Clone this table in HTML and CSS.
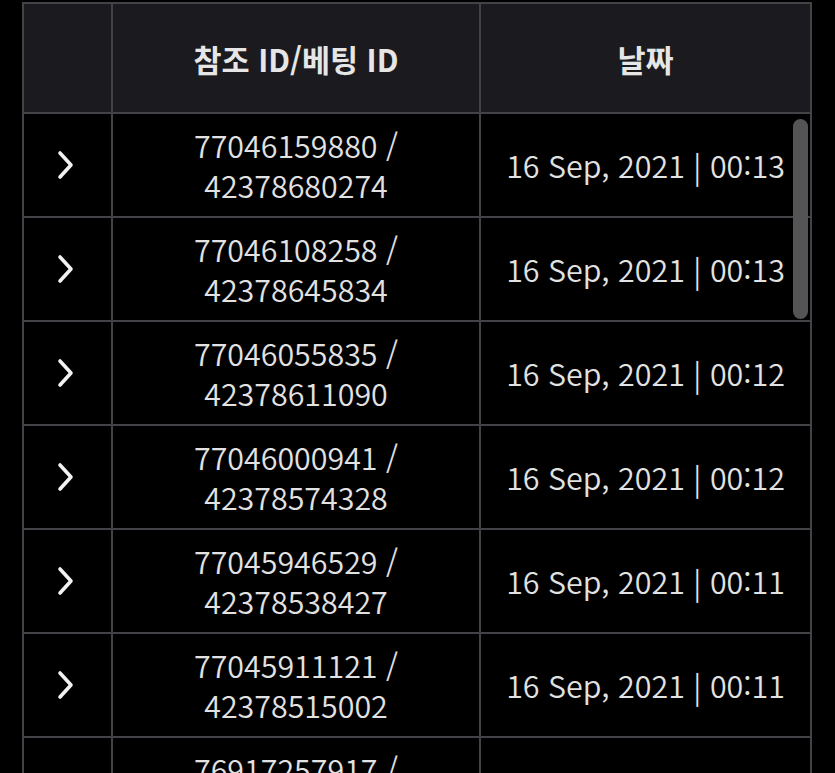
FILE: index.html
```html
<!DOCTYPE html>
<html lang="ko">
<head>
<meta charset="utf-8">
<link rel="stylesheet" href="styles.css">
</head>
<body>
<div class="page">
  <div class="table">
    <div class="head">
      <div class="hcell"></div>
      <div class="hcell">참조 ID/베팅 ID</div>
      <div class="hcell">날짜</div>
    </div>
    <div class="body">
      <div class="row">
        <div class="cell chev"><svg width="20" height="30" viewBox="0 0 20 30"><path d="M4 3 L15 15 L4 27" fill="none" stroke="#f2f2f2" stroke-width="3.6" stroke-linecap="round" stroke-linejoin="round"/></svg></div>
        <div class="cell ids">77046159880 /<br>42378680274</div>
        <div class="cell date">16 Sep, 2021 | 00:13</div>
      </div>
      <div class="row">
        <div class="cell chev"><svg width="20" height="30" viewBox="0 0 20 30"><path d="M4 3 L15 15 L4 27" fill="none" stroke="#f2f2f2" stroke-width="3.6" stroke-linecap="round" stroke-linejoin="round"/></svg></div>
        <div class="cell ids">77046108258 /<br>42378645834</div>
        <div class="cell date">16 Sep, 2021 | 00:13</div>
      </div>
      <div class="row">
        <div class="cell chev"><svg width="20" height="30" viewBox="0 0 20 30"><path d="M4 3 L15 15 L4 27" fill="none" stroke="#f2f2f2" stroke-width="3.6" stroke-linecap="round" stroke-linejoin="round"/></svg></div>
        <div class="cell ids">77046055835 /<br>42378611090</div>
        <div class="cell date">16 Sep, 2021 | 00:12</div>
      </div>
      <div class="row">
        <div class="cell chev"><svg width="20" height="30" viewBox="0 0 20 30"><path d="M4 3 L15 15 L4 27" fill="none" stroke="#f2f2f2" stroke-width="3.6" stroke-linecap="round" stroke-linejoin="round"/></svg></div>
        <div class="cell ids">77046000941 /<br>42378574328</div>
        <div class="cell date">16 Sep, 2021 | 00:12</div>
      </div>
      <div class="row">
        <div class="cell chev"><svg width="20" height="30" viewBox="0 0 20 30"><path d="M4 3 L15 15 L4 27" fill="none" stroke="#f2f2f2" stroke-width="3.6" stroke-linecap="round" stroke-linejoin="round"/></svg></div>
        <div class="cell ids">77045946529 /<br>42378538427</div>
        <div class="cell date">16 Sep, 2021 | 00:11</div>
      </div>
      <div class="row">
        <div class="cell chev"><svg width="20" height="30" viewBox="0 0 20 30"><path d="M4 3 L15 15 L4 27" fill="none" stroke="#f2f2f2" stroke-width="3.6" stroke-linecap="round" stroke-linejoin="round"/></svg></div>
        <div class="cell ids">77045911121 /<br>42378515002</div>
        <div class="cell date">16 Sep, 2021 | 00:11</div>
      </div>
      <div class="row">
        <div class="cell chev"><svg width="20" height="30" viewBox="0 0 20 30"><path d="M4 3 L15 15 L4 27" fill="none" stroke="#f2f2f2" stroke-width="3.6" stroke-linecap="round" stroke-linejoin="round"/></svg></div>
        <div class="cell ids">76917257917 /<br>42378490011</div>
        <div class="cell date">16 Sep, 2021 | 00:10</div>
      </div>
      <div class="scrollbar"></div>
    </div>
  </div>
</div>
</body>
</html>
```

FILE: styles.css
```css
html, body {
  margin: 0;
  padding: 0;
  background: #000;
  height: 773px;
  overflow: hidden;
}
.page {
  padding: 2px 0 0 22px;
  font-family: "Noto Sans CJK KR", "Noto Sans", sans-serif;
  color: #e2e2e2;
}
.table {
  width: 790px;
  background: #434347;
  padding: 2px;
  box-sizing: border-box;
}
.head, .row {
  display: grid;
  grid-template-columns: 87px 366px 329px;
  column-gap: 2px;
}
.head {
  height: 108px;
}
.hcell {
  background: #1b1b1f;
  display: flex;
  align-items: center;
  justify-content: center;
  font-size: 30.5px;
  font-weight: 700;
  color: #e6e6e6;
  padding-top: 2px;
}
.body {
  position: relative;
  display: flex;
  flex-direction: column;
  row-gap: 2px;
  padding-top: 2px;
}
.row {
  height: 102px;
}
.cell {
  background: #000;
  display: flex;
  align-items: center;
  justify-content: center;
  text-align: center;
  font-size: 30.4px;
  font-weight: 350;
  line-height: 40px;
}
.chev svg {
  display: block;
  margin-right: 3px;
}
.scrollbar {
  position: absolute;
  right: 2px;
  top: 7px;
  width: 15px;
  height: 200px;
  border-radius: 8px;
  background: #545457;
}
```
